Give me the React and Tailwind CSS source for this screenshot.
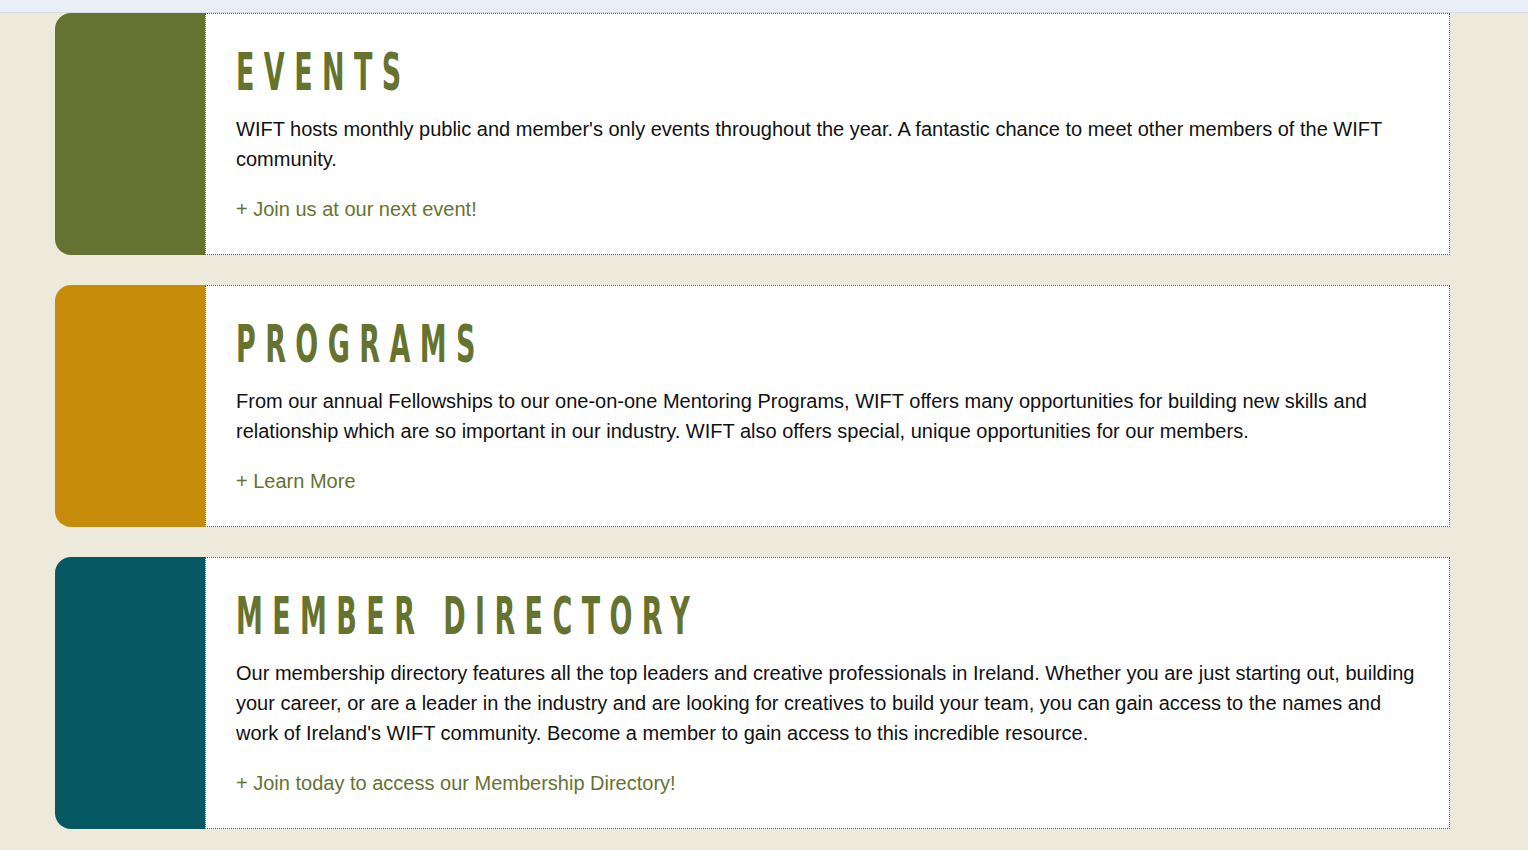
import React from 'react';

const SECTIONS = [
    {
        title: "EVENTS",
        color: "bg-[#667232]",
        text: "WIFT hosts monthly public and member's only events throughout the year. A fantastic chance to meet other members of the WIFT community.",
        link: "+ Join us at our next event!"
    },
    {
        title: "PROGRAMS",
        color: "bg-[#c68b08]",
        text: "From our annual Fellowships to our one-on-one Mentoring Programs, WIFT offers many opportunities for building new skills and relationship which are so important in our industry. WIFT also offers special, unique opportunities for our members.",
        link: "+ Learn More"
    },
    {
        title: "MEMBER DIRECTORY",
        color: "bg-[#065863]",
        text: "Our membership directory features all the top leaders and creative professionals in Ireland. Whether you are just starting out, building your career, or are a leader in the industry and are looking for creatives to build your team, you can gain access to the names and work of Ireland's WIFT community. Become a member to gain access to this incredible resource.",
        link: "+ Join today to access our Membership Directory!"
    }
];

const SectionCard = ({ title, color, text, link }) => {
    return (
        <div className="flex w-[1395px]">
            <div className={`${color} w-[150px] shrink-0 rounded-l-[16px]`}></div>
            <div className="flex-1 bg-white border border-dotted border-[#5b6236] pl-[30px] pr-[30px] pt-[33px] pb-[30px]">
                {/* condensed display heading, stretched vertically */}
                <div className="h-[67px]">
                    <h2
                        className="inline-block origin-top scale-y-[1.7] text-[30px] leading-[30px] font-bold tracking-[9.4px] text-[#66732f] font-stretch-condensed whitespace-nowrap"
                        style={{ fontFamily: '"DejaVu Sans Condensed", "DejaVu Sans", sans-serif' }}
                    >
                        {title}
                    </h2>
                </div>
                <p className="text-[20px] leading-[30px] text-[#111]">{text}</p>
                <a href="#" className="block mt-[20px] text-[20px] leading-[30px] text-[#66732f]">
                    {link}
                </a>
            </div>
        </div>
    );
};

export default function App() {
    return (
        <div
            className="min-h-[850px] bg-[#edeadb]"
            style={{ fontFamily: '"Liberation Sans", Arial, sans-serif' }}
        >
            <div className="h-[13px] bg-[#e9eef7] border-b border-[#d6dbe4]"></div>
            <div className="ml-[55px] flex flex-col gap-[30px] pb-[30px]">
                {SECTIONS.map((s) => (
                    <SectionCard key={s.title} {...s} />
                ))}
            </div>
        </div>
    );
}
